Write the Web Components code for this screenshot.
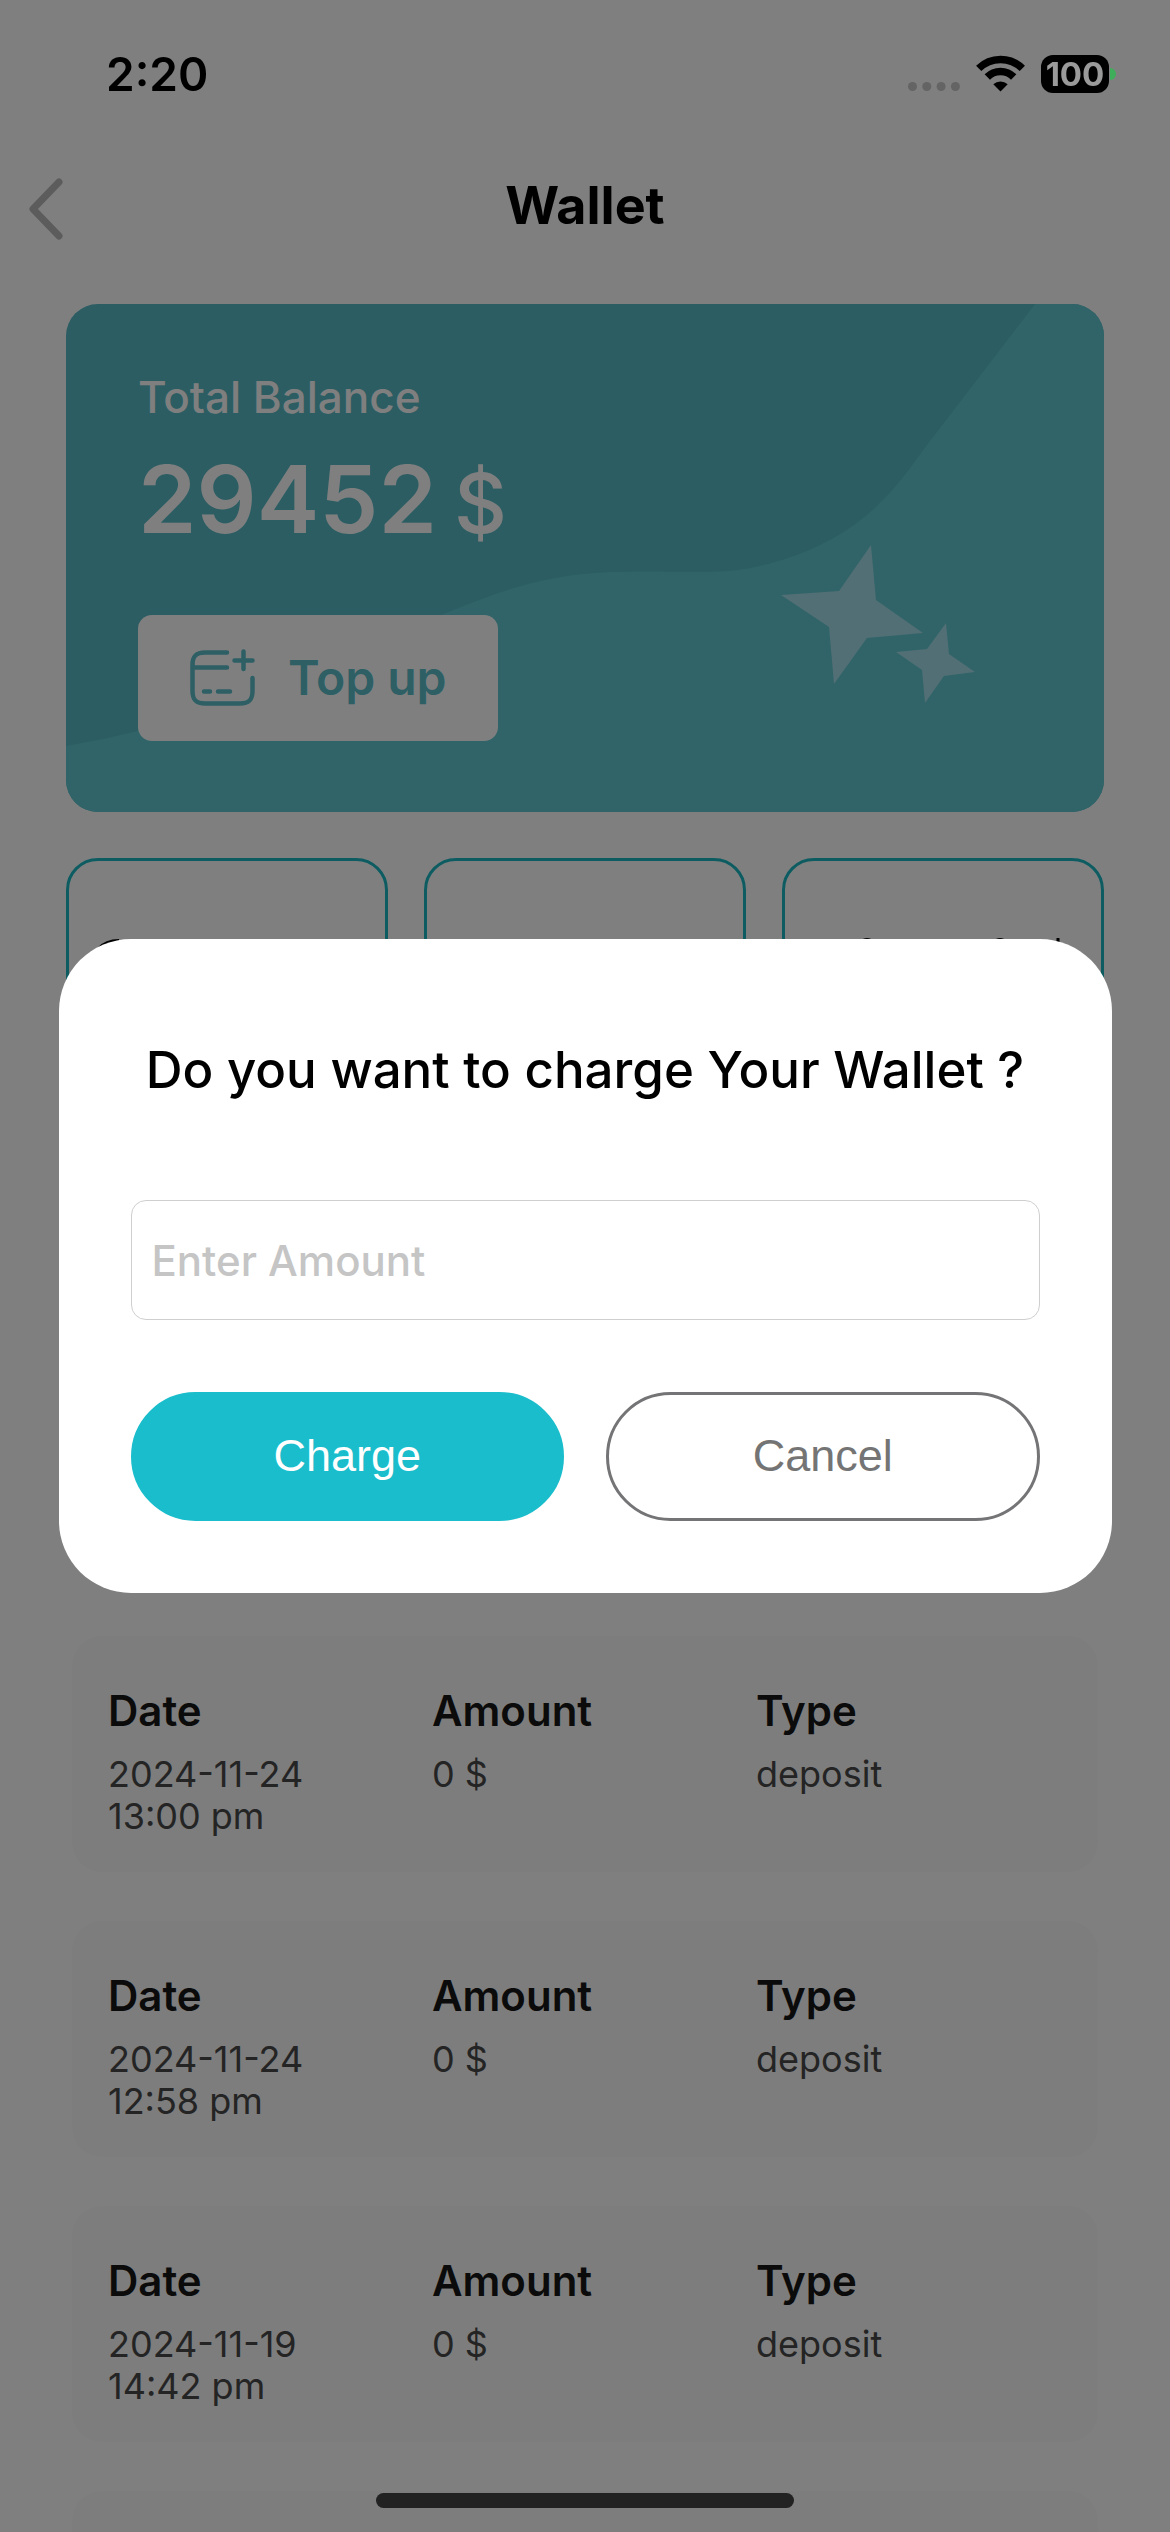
<!DOCTYPE html>
<html lang="en">
<head>
<meta charset="utf-8">
<meta name="viewport" content="width=device-width, initial-scale=1">
<title>Wallet</title>
<style>
  html, body { margin: 0; height: 100%; }
  body { background: #fff; color: #000; font-family: Inter, "Liberation Sans", sans-serif; overflow: hidden; }
</style>
</head>
<body>
<wallet-app></wallet-app>

<script>
const define = (name, html, setup) => {
  const template = document.createElement('template');
  template.innerHTML = html;
  customElements.define(name, class extends HTMLElement {
    constructor() {
      super();
      this.attachShadow({ mode: 'open' }).append(template.content.cloneNode(true));
    }
    connectedCallback() { if (setup) setup(this, this.shadowRoot); }
  });
};

define('status-bar', `
  <style>
    :host { display: flex; align-items: center; justify-content: space-between; height: 148px; padding: 0 54px 0 106px; box-sizing: border-box; position: relative; z-index: 3; }
    time { font-size: 46px; line-height: 56px; font-weight: 600; }
    .system { display: flex; align-items: center; gap: 16px; }
    .battery { display: flex; align-items: center; gap: 1px; }
    .level { width: 68px; height: 38px; border-radius: 12px; background: #000; color: #9a9a9a; font-size: 33px; line-height: 38px; font-weight: 700; text-align: center; }
    .nub { width: 6px; height: 12px; border-radius: 0 6px 6px 0; background: #3fae5a; }
    svg { display: block; }
  </style>
  <time>2:20</time>
  <div class="system">
    <svg width="52" height="38" viewBox="0 0 52 38" fill="#646464" aria-label="No signal">
      <circle cx="4.5" cy="31.500" r="4.500"/><circle cx="18.800" cy="31.500" r="4.500"/><circle cx="33.100" cy="31.500" r="4.500"/><circle cx="47.400" cy="31.500" r="4.500"/>
    </svg>
    <svg width="49" height="38" viewBox="0 0 49 38" aria-label="Wi-Fi">
      <g fill="none" stroke="#000" stroke-width="7.500">
        <path d="M2.700 13.400 A31 31 0 0 1 46.300 13.400"/>
        <path d="M11.300 22 A18.500 18.500 0 0 1 37.700 22"/>
      </g>
      <path d="M24.500 36.500 L17.300 29.300 A10.500 10.500 0 0 1 31.700 29.300 Z"/>
    </svg>
    <div class="battery"><div class="level">100</div><div class="nub"></div></div>
  </div>`);

define('page-header', `
  <style>
    :host { display: grid; grid-template-columns: 1fr auto 1fr; align-items: center; height: 116px; }
    button { justify-self: start; border: 0; padding: 0; margin: 0; background: none; display: block; }
    svg { display: block; }
    h1 { margin: 0; font-size: 52px; line-height: 64px; font-weight: 700; }
  </style>
  <button type="button" aria-label="Back">
    <svg width="96" height="72" viewBox="0 0 96 72" fill="none" stroke="#b8b8b8" stroke-width="7" stroke-linecap="round" stroke-linejoin="round"><path d="M59 12 L33 39 L59 66"/></svg>
  </button>
  <h1><slot></slot></h1>`);

define('balance-card', `
  <style>
    :host { display: block; position: relative; overflow: hidden; border-radius: 32px; background: #56bac6; color: #fff; }
    .art { position: absolute; inset: 0; width: 100%; height: 100%; }
    .body { position: relative; display: flex; flex-direction: column; align-items: flex-start; padding: 65px 72px 71px; }
    .label { font-size: 44px; line-height: 56px; font-weight: 500; }
    .amount { margin-top: 16px; display: flex; align-items: baseline; gap: 17px; height: 116px; font-size: 94px; line-height: 116px; font-weight: 600; }
    .currency { font-size: 82px; font-weight: 500; }
    button { margin-top: 58px; width: 360px; height: 126px; border: 0; border-radius: 14px; padding: 0 50px; background: #fff; color: #5abecb; display: flex; align-items: center; gap: 32px; font: 600 48px/60px Inter, "Liberation Sans", sans-serif; white-space: nowrap; }
    button svg { display: block; flex: none; }
  </style>
  <svg class="art" viewBox="0 0 1038 508" preserveAspectRatio="none" aria-hidden="true">
    <path fill="#60c8d0" d="M0 442 Q36 436 72 427 C180 400 290 344 390 305 C430 289 475 271 544 268 C590 266 640 270 672 266 C715 260 775 240 817 196 C835 178 848 158 861 141 L969 0 H1038 V508 H0 Z"/>
    <g fill="#a2dee8">
      <path d="M805 241 L810 296 L857 329 L801 334 L768 380 L763 323 L715 291 L773 287 Z"/>
      <path d="M880 319 L883 350 L909 368 L878 372 L859 399 L856 366 L830 348 L861 345 Z"/>
    </g>
  </svg>
  <div class="body">
    <div class="label">Total Balance</div>
    <div class="amount"><slot></slot><span class="currency">$</span></div>
    <button type="button">
      <svg width="68" height="60" viewBox="0 0 68 60" fill="none" stroke="#5abecb" stroke-width="4.500" stroke-linecap="round" aria-hidden="true">
        <path d="M39 4.500 H17 C8 4.500 4.500 8 4.500 17 V43 C4.500 52 8 55.500 17 55.500 H52 C61 55.500 64.500 52 64.500 43 V30"/>
        <path d="M5 19.500 H39 M55.500 3.500 V21 M46.500 12.500 H64.500 M16 43.500 H22 M30 43.500 H42"/>
      </svg>
      <span>Top up</span>
    </button>
  </div>`);

define('option-tiles', `
  <style>
    :host { display: grid; grid-template-columns: repeat(3, 1fr); gap: 36px; }
    div { height: 260px; border: 3px solid #1bb9c4; border-radius: 32px; box-sizing: border-box; }
    svg { display: block; width: 100%; }
  </style>
  <div><svg viewBox="0 0 316 100" fill="none" stroke="#000" stroke-width="4"><path d="M30 88 Q37 80 50 80"/></svg></div>
  <div></div>
  <div><svg viewBox="0 0 316 100" fill="none" stroke="#000" stroke-width="3"><path d="M77 80 Q82 77 87 80 M210 80 Q215 77 220 80 M273 77 V88"/></svg></div>`);

define('transaction-card', `
  <style>
    :host { display: block; min-height: 236px; background: #fafafa; border-radius: 30px; }
    dl { margin: 0; display: grid; grid-template-columns: repeat(3, 1fr); padding: 49px 18px 35px 36px; }
    dt { font-size: 42px; line-height: 52px; font-weight: 600; color: #161616; }
    dd { margin: 16px 0 0; min-height: 84px; font-size: 36px; line-height: 42px; color: #484848; }
  </style>
  <dl>
    <div><dt>Date</dt><dd><span class="day"></span><br><span class="time"></span></dd></div>
    <div><dt>Amount</dt><dd class="amount"></dd></div>
    <div><dt>Type</dt><dd class="type"></dd></div>
  </dl>`, (host, root) => {
    if (!host.hasAttribute('day')) { root.querySelector('dl').remove(); return; }
    for (const key of ['day', 'time', 'amount', 'type'])
      root.querySelector('.' + key).textContent = host.getAttribute(key);
  });

define('charge-dialog', `
  <style>
    :host { position: fixed; inset: 0; z-index: 2; display: flex; align-items: center; justify-content: center; background: rgba(0, 0, 0, .502); }
    form { width: 90%; box-sizing: border-box; background: #fff; border-radius: 72px; padding: 100px 72px 72px; display: flex; flex-direction: column; }
    label { font-size: 51px; line-height: 62px; font-weight: 500; text-align: center; white-space: nowrap; }
    input { margin: 99px 0 72px; height: 120px; width: 100%; box-sizing: border-box; border: 1px solid #cfcfcf; border-radius: 15px; padding: 0 20px; background: #fff; color: #000; font: 500 42px/52px Inter, "Liberation Sans", sans-serif; outline: 0; }
    input::placeholder { color: #c5c5c5; opacity: 1; }
    .actions { display: grid; grid-template-columns: 1fr 1fr; gap: 42px; }
    button { height: 129px; border-radius: 65px; border: 3px solid #1abdcb; background: #1abdcb; color: #fff; font: 45px/54px "Liberation Sans", sans-serif; padding: 0 0 2px; }
    .cancel { border-color: #747476; background: #fff; color: #747474; }
  </style>
  <form role="dialog" aria-modal="true">
    <label for="amount">Do you want to charge Your Wallet ?</label>
    <input id="amount" type="text" inputmode="decimal" placeholder="Enter Amount">
    <div class="actions">
      <button type="button">Charge</button>
      <button type="button" class="cancel">Cancel</button>
    </div>
  </form>`);

define('home-indicator', `
  <style>
    :host { position: fixed; left: 0; right: 0; bottom: 24px; z-index: 3; display: flex; justify-content: center; }
    div { width: 418px; height: 15px; border-radius: 8px; background: #222; }
  </style>
  <div></div>`);

define('wallet-app', `
  <style>
    :host { display: block; height: 100%; overflow: hidden; }
    main { padding: 40px 66px 0; }
    option-tiles { margin-top: 46px; }
    .history { margin: 518px 6px 0; display: flex; flex-direction: column; gap: 49px; }
  </style>
  <status-bar></status-bar>
  <page-header>Wallet</page-header>
  <main>
    <balance-card>29452</balance-card>
    <option-tiles></option-tiles>
    <section class="history" aria-label="Transactions">
      <transaction-card day="2024-11-24" time="13:00 pm" amount="0 $" type="deposit"></transaction-card>
      <transaction-card day="2024-11-24" time="12:58 pm" amount="0 $" type="deposit"></transaction-card>
      <transaction-card day="2024-11-19" time="14:42 pm" amount="0 $" type="deposit"></transaction-card>
      <transaction-card></transaction-card>
    </section>
  </main>
  <charge-dialog></charge-dialog>
  <home-indicator></home-indicator>`);
</script>
</body>
</html>
